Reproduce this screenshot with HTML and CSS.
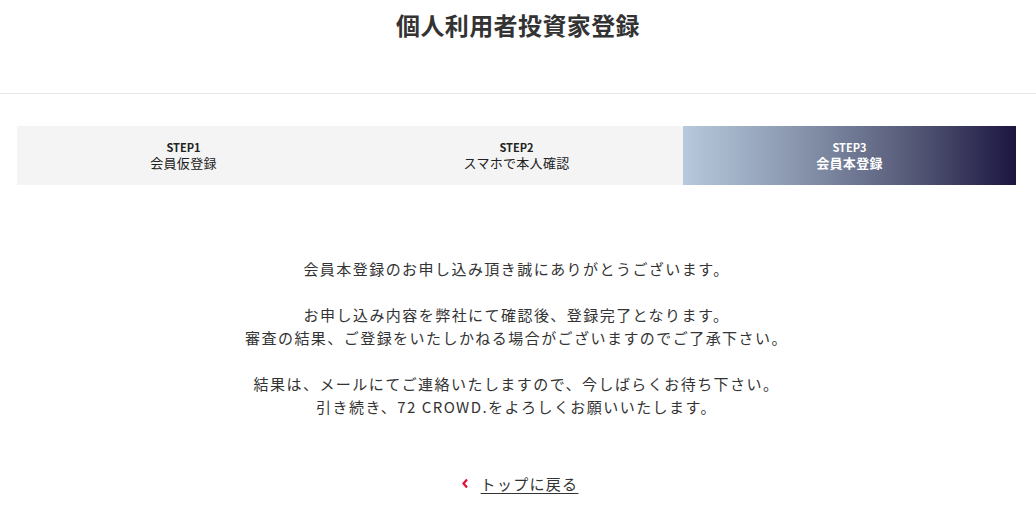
FILE: index.html
```html
<!DOCTYPE html>
<html lang="ja">
<head>
    <meta charset="UTF-8">
    <meta name="viewport" content="width=device-width, initial-scale=1.0">
    <title>個人利用者投資家登録</title>
    <link rel="stylesheet" href="styles.css">
</head>
<body>
    <header class="page-head">
        <h1>個人利用者投資家登録</h1>
    </header>

    <main class="content">
        <ol class="steps">
            <li class="step">
                <span class="step-no">STEP1</span>
                <span class="step-name">会員仮登録</span>
            </li>
            <li class="step">
                <span class="step-no">STEP2</span>
                <span class="step-name">スマホで本人確認</span>
            </li>
            <li class="step current">
                <span class="step-no">STEP3</span>
                <span class="step-name">会員本登録</span>
            </li>
        </ol>

        <p class="message">
            会員本登録のお申し込み頂き誠にありがとうございます。<br><br>
            お申し込み内容を弊社にて確認後、登録完了となります。<br>
            審査の結果、ご登録をいたしかねる場合がございますのでご了承下さい。<br><br>
            結果は、メールにてご連絡いたしますので、今しばらくお待ち下さい。<br>
            引き続き、72 CROWD.をよろしくお願いいたします。
        </p>

        <div class="back">
            <a href="#" class="back-link">
                <svg class="chev" width="8" height="11" viewBox="0 0 8 11"><path d="M6 1.5 L2.5 5.5 L6 9.5" fill="none" stroke="#e0103a" stroke-width="2.2"/></svg>
                <span>トップに戻る</span>
            </a>
        </div>
    </main>
</body>
</html>
```

FILE: styles.css
```css
body {
    margin: 0;
    font-family: "Noto Sans CJK JP", "Noto Sans", sans-serif;
    color: #333;
    background-color: #fff;
}
.page-head {
    border-bottom: 1px solid #e6e6e6;
    height: 93px;
}
.page-head h1 {
    margin: 0;
    padding-top: 8px;
    text-align: center;
    font-size: 24px;
    font-weight: 700;
    line-height: 34px;
    letter-spacing: 0.4px;
}
.content {
    padding: 32px 20px 0 17px;
}
.steps {
    list-style: none;
    margin: 0;
    padding: 0;
    display: grid;
    grid-template-columns: 1fr 1fr 1fr;
    height: 59px;
    background-color: #f4f4f4;
}
.step {
    display: flex;
    flex-direction: column;
    align-items: center;
    justify-content: center;
    color: #222;
}
.step-no {
    font-size: 11px;
    font-weight: 600;
    line-height: 14px;
}
.step-name {
    font-size: 13px;
    line-height: 18px;
    letter-spacing: 0.3px;
}
.step.current {
    color: #fff;
    font-weight: 700;
    background: linear-gradient(to right, #b7c9dd, #8f9db4 30%, #535775 70%, #1c1540);
}
.message {
    margin: 72px 0 0;
    text-align: center;
    font-size: 15px;
    line-height: 23px;
    letter-spacing: 1.45px;
    color: #333;
}
.back {
    margin-top: 52px;
    text-align: center;
}
.back-link {
    color: #333;
    font-size: 15px;
    letter-spacing: 1.3px;
    text-decoration: none;
    display: inline-flex;
    align-items: center;
    gap: 12px;
    padding-left: 6px;
}
.back-link span {
    text-decoration: underline;
    text-underline-offset: 3px;
}
```
